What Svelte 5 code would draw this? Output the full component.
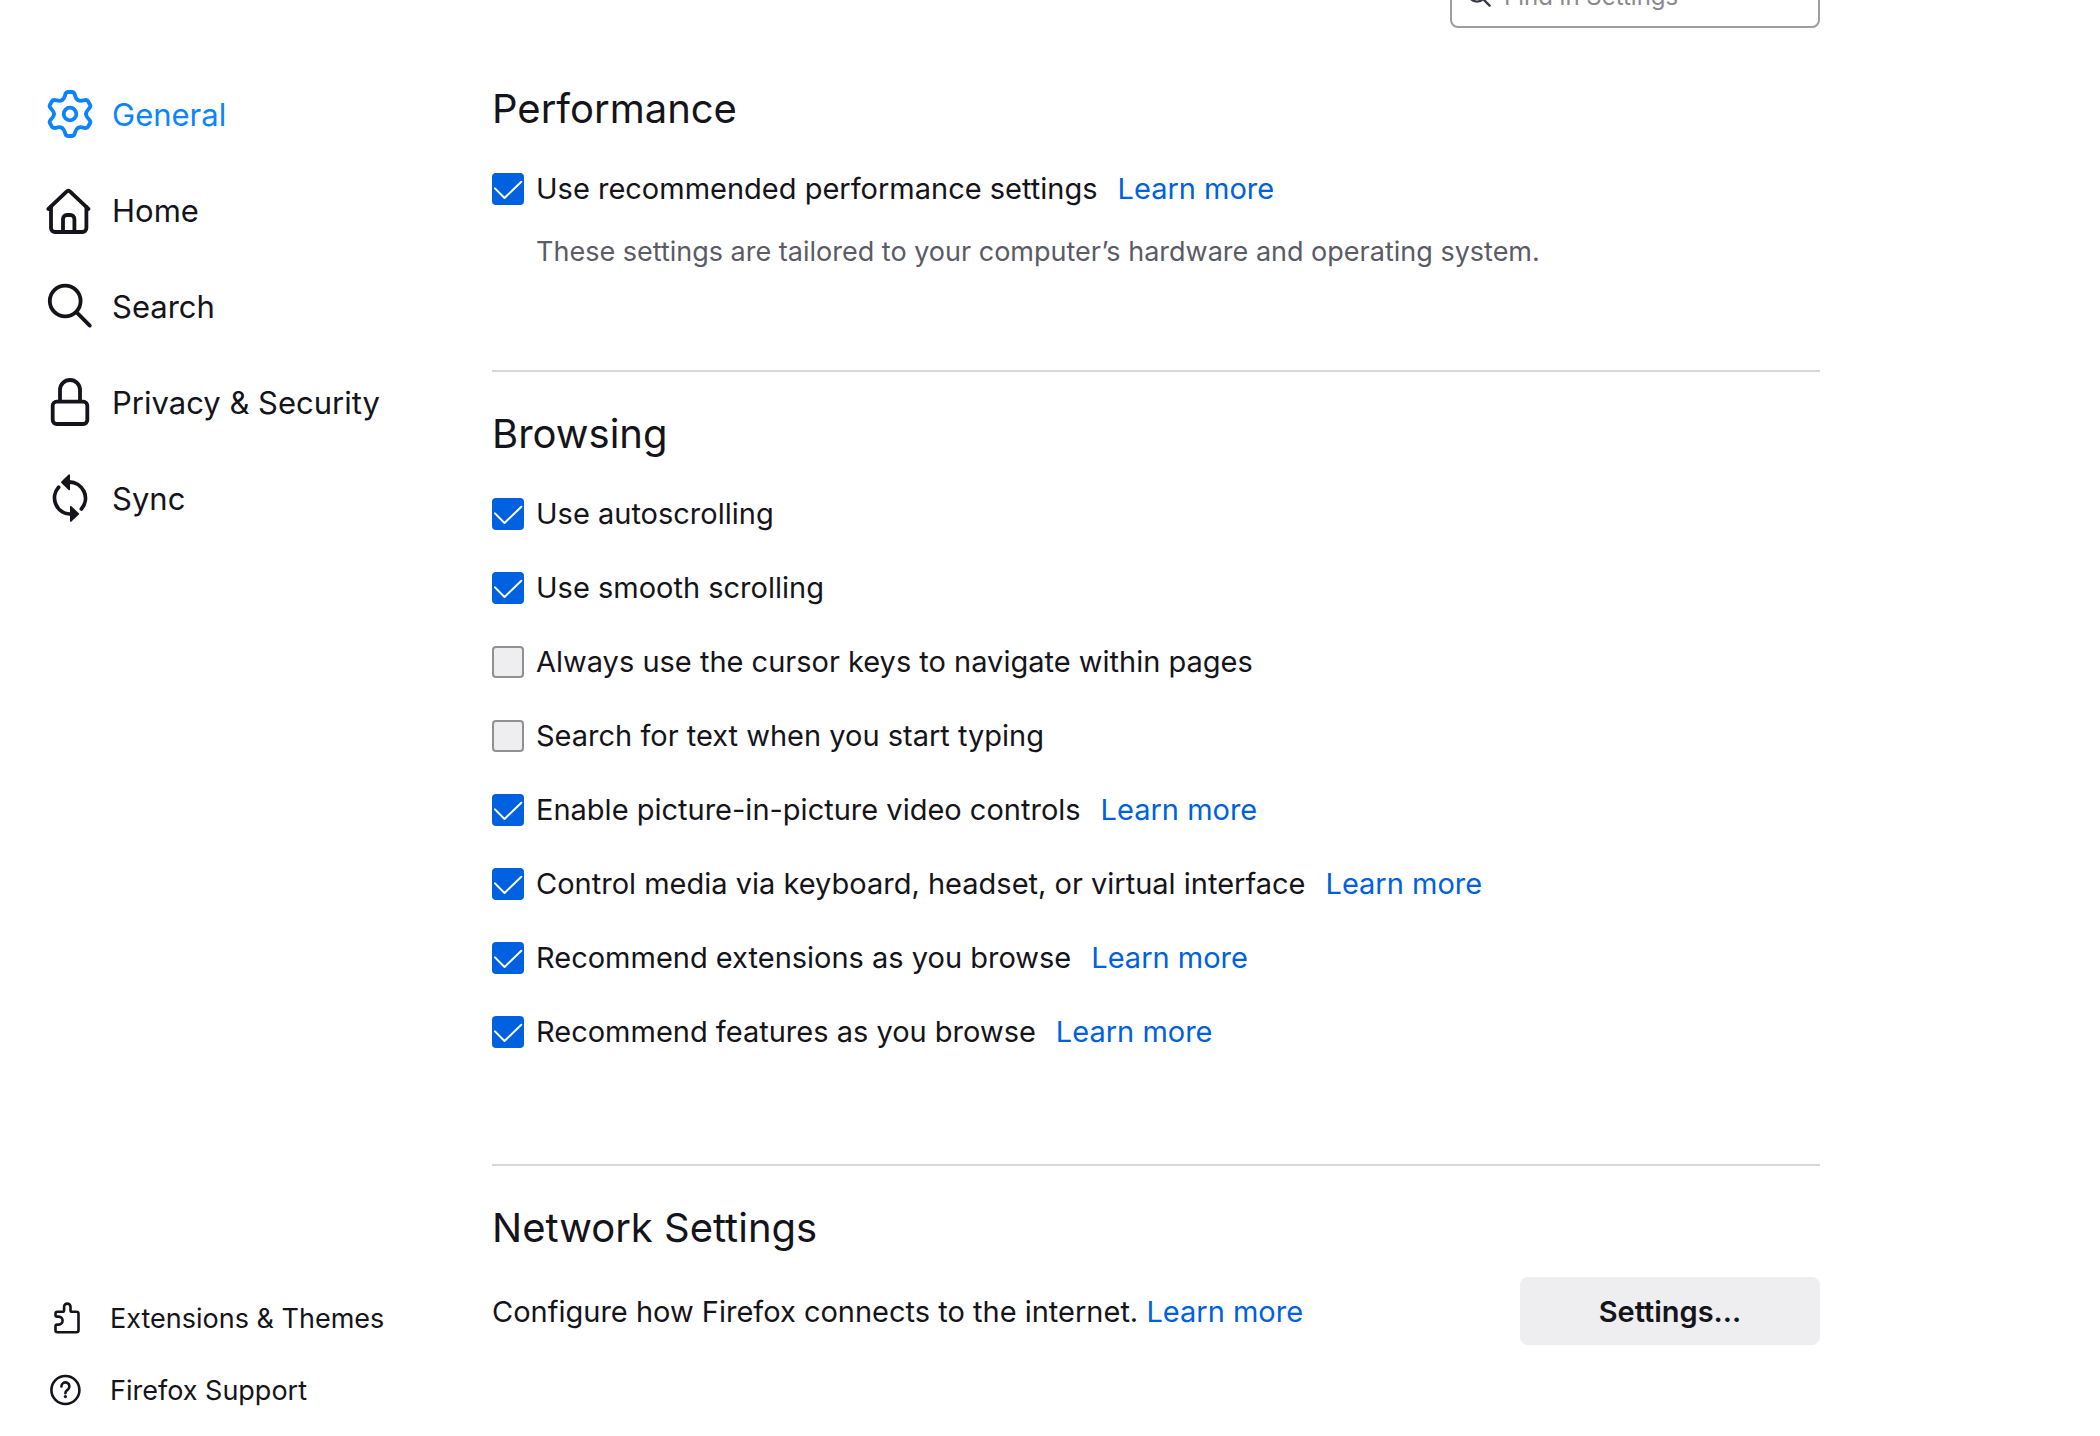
<script lang="ts">
	interface Option {
		id: string;
		label: string;
		checked: boolean;
		link?: boolean;
	}

	const categories = [
		{ id: 'general', label: 'General' },
		{ id: 'home', label: 'Home' },
		{ id: 'search', label: 'Search' },
		{ id: 'privacy', label: 'Privacy & Security' },
		{ id: 'sync', label: 'Sync' }
	];

	let selected = $state('general');

	let performance = $state<Option[]>([
		{ id: 'recommended-performance', label: 'Use recommended performance settings', checked: true, link: true }
	]);

	let browsing = $state<Option[]>([
		{ id: 'autoscroll', label: 'Use autoscrolling', checked: true },
		{ id: 'smooth-scroll', label: 'Use smooth scrolling', checked: true },
		{ id: 'cursor-keys', label: 'Always use the cursor keys to navigate within pages', checked: false },
		{ id: 'type-search', label: 'Search for text when you start typing', checked: false },
		{ id: 'pip', label: 'Enable picture-in-picture video controls', checked: true, link: true },
		{ id: 'media-control', label: 'Control media via keyboard, headset, or virtual interface', checked: true, link: true },
		{ id: 'cfr-extensions', label: 'Recommend extensions as you browse', checked: true, link: true },
		{ id: 'cfr-features', label: 'Recommend features as you browse', checked: true, link: true }
	]);
</script>

{#snippet icon(id: string)}
	<svg class="icon" viewBox="0 0 48 48" aria-hidden="true">
		{#if id === 'general'}
			<!-- one tooth, repeated around the hub -->
			{#each [0, 60, 120, 180, 240, 300] as angle}
				<path
					transform="rotate({angle} 24 24)"
					d="M16 10.1C18.6 8.6 18.6 6.5 19.3 4.4C19.8 2.8 20.8 2 22.3 2H25.7C27.2 2 28.2 2.8 28.7 4.4C29.4 6.5 29.4 8.6 32 10.1"
				/>
			{/each}
			<circle cx="24" cy="24" r="6.3" />
		{:else if id === 'home'}
			<path d="M2.4 22.9 20.3 5.8a3 3 0 0 1 4.1 0L42.4 22.9" />
			<path d="M5 21V42a4 4 0 0 0 4 4H36.4a4 4 0 0 0 4-4V21" />
			<path d="M17 46V33a4 4 0 0 1 4-4h3.4a4 4 0 0 1 4 4V46" />
		{:else if id === 'search'}
			<circle cx="19.2" cy="19" r="15.4" />
			<path d="M30.4 30.2 43.8 43.6" />
		{:else if id === 'privacy'}
			<path d="M14 23V12a10 10 0 0 1 20 0V23" />
			<rect x="6.7" y="23.6" width="34.6" height="22.4" rx="4" />
		{:else if id === 'sync'}
			<path d="M23 8A16.2 16.2 0 0 1 35.4 34.9" />
			<path d="M25 40.1A16.2 16.2 0 0 1 12.6 13.2" />
			<path class="solid" d="M24 1.4V15.4a.8.8 0 0 1-1.4.6L15.4 9a1 1 0 0 1 0-1.4L22.6.6A.8.8 0 0 1 24 1.2z" />
			<path class="solid" d="M24 46.8V32.8a.8.8 0 0 1 1.4-.6L32.8 39.2a1 1 0 0 1 0 1.4L25.4 47.6a.8.8 0 0 1-1.4-.6z" />
		{/if}
	</svg>
{/snippet}

{#snippet option(item: Option)}
	<div class="option">
		<span class="box">
			<input type="checkbox" id={item.id} bind:checked={item.checked} />
			<svg viewBox="0 0 32 32" aria-hidden="true"><path d="M3 15.4 12.5 25 29.3 8.8" /></svg>
		</span>
		<label for={item.id}>{item.label}</label>
		{#if item.link}
			<a class="learn" href="#{item.id}">Learn more</a>
		{/if}
	</div>
{/snippet}

<div class="page">
	<aside>
		<nav class="categories">
			{#each categories as category}
				<a
					href="#{category.id}"
					class:selected={selected === category.id}
					onclick={() => (selected = category.id)}
				>
					{@render icon(category.id)}
					<span>{category.label}</span>
				</a>
			{/each}
		</nav>

		<nav class="footer">
			<a href="#addons">
				<svg viewBox="0 0 32 32" aria-hidden="true">
					<path
						d="M5.5 13.5V11.8a2 2 0 0 1 2-2H12.5a1.6 1.6 0 0 0 1.6-1.6V4.8a3.2 3.2 0 0 1 6.4 0V8.2a1.6 1.6 0 0 0 1.6 1.6H26.5a2 2 0 0 1 2 2V28.2a2 2 0 0 1-2 2H7.5a2 2 0 0 1-2-2V24.2a1.6 1.6 0 0 1 1.6-1.6H8.6a4 4 0 0 0 0-8H6.6a1.1 1.1 0 0 1-1.1-1.1z"
					/>
				</svg>
				<span>Extensions &amp; Themes</span>
			</a>
			<a href="#support">
				<svg viewBox="0 0 32 32" aria-hidden="true">
					<circle cx="15.4" cy="16" r="14" />
					<path d="M11.4 12.4a4 4 0 1 1 6.6 3c-1.5 1.2-2.6 1.8-2.6 3.8" />
					<circle class="solid" cx="15.4" cy="22.6" r="1.6" />
				</svg>
				<span>Firefox Support</span>
			</a>
		</nav>
	</aside>

	<main>
		<div class="search">
			<svg viewBox="0 0 32 32" aria-hidden="true">
				<circle cx="13" cy="13" r="8.6" />
				<path d="M19.2 19.2 25.6 25.6" />
			</svg>
			<input type="search" placeholder="Find in Settings" aria-label="Find in Settings" />
		</div>

		<section>
			<h2>Performance</h2>
			{#each performance as item}
				{@render option(item)}
			{/each}
			<p class="description">These settings are tailored to your computer’s hardware and operating system.</p>
		</section>

		<section>
			<h2>Browsing</h2>
			<div class="options">
				{#each browsing as item}
					{@render option(item)}
				{/each}
			</div>
		</section>

		<section>
			<h2>Network Settings</h2>
			<div class="network">
				<p>Configure how Firefox connects to the internet. <a href="#network">Learn more</a></p>
				<button type="button">Settings…</button>
			</div>
		</section>
	</main>
</div>

<style>
	:global(body) {
		background: #fff;
		color: #15141a;
		font-family: Inter, 'Liberation Sans', sans-serif;
		font-size: 29px;
	}

	.page {
		display: flex;
		height: 100vh;
		overflow: hidden;
	}

	a {
		color: #0061e0;
		text-decoration: none;
	}

	svg {
		flex: none;
		fill: none;
		stroke: currentColor;
		stroke-width: 3;
		stroke-linecap: round;
		stroke-linejoin: round;
	}

	.solid {
		fill: currentColor;
		stroke: none;
	}

	aside {
		flex: none;
		display: flex;
		flex-direction: column;
		justify-content: space-between;
		box-sizing: border-box;
		width: 492px;
		padding: 90px 46px 30px;
	}

	aside span {
		padding-top: 2px;
	}

	.categories {
		display: flex;
		flex-direction: column;
		gap: 48px;
		font-size: 31px;
		line-height: 46px;
	}

	.categories a {
		display: flex;
		align-items: center;
		gap: 18px;
		color: inherit;
	}

	.categories a.selected {
		color: #0a84ff;
	}

	.icon {
		width: 48px;
		height: 48px;
		stroke-width: 3.8;
	}

	.footer {
		display: flex;
		flex-direction: column;
		gap: 40px;
		padding-left: 4px;
		font-size: 27px;
		line-height: 30px;
	}

	.footer a {
		display: flex;
		align-items: center;
		gap: 28px;
		color: inherit;
	}

	.footer svg {
		width: 32px;
		height: 32px;
		stroke-width: 2.6;
	}

	main {
		flex: 1;
		max-width: 1328px;
	}

	/* the pane is scrolled, so the field is partly above the window */
	.search {
		display: flex;
		align-items: center;
		gap: 8px;
		box-sizing: border-box;
		width: 370px;
		height: 64px;
		margin: -36px 0 0 auto;
		padding: 0 12px;
		border: 2px solid #9e9ea0;
		border-radius: 8px;
	}

	.search svg {
		width: 32px;
		height: 32px;
		color: #3a3944;
		stroke-width: 2.4;
	}

	.search input {
		flex: 1;
		min-width: 0;
		padding: 0;
		border: 0;
		outline: 0;
		background: none;
		font: inherit;
		font-size: 24px;
	}

	.search input::placeholder {
		color: #8a8a8e;
	}

	section {
		padding: 36px 0 113px;
	}

	section + section {
		border-top: 2px solid #d7d7db;
	}

	.search + section {
		padding: 55px 0 102px;
	}

	h2 {
		margin: 0 0 35px;
		font-size: 40px;
		font-weight: 400;
		line-height: 52px;
	}

	.options {
		display: flex;
		flex-direction: column;
		gap: 36px;
	}

	.option {
		display: flex;
		align-items: center;
		line-height: 38px;
	}

	.box {
		display: grid;
		width: 32px;
		height: 32px;
		margin-right: 12px;
	}

	.box input,
	.box svg {
		grid-area: 1 / 1;
		width: 32px;
		height: 32px;
		margin: 0;
	}

	.box input {
		appearance: none;
		box-sizing: border-box;
		border: 2px solid #919194;
		border-radius: 4px;
		background: #eeeef0;
	}

	.box input:checked {
		border-color: #0061e0;
		background: #0061e0;
	}

	.box svg {
		visibility: hidden;
		color: #fff;
		stroke-width: 2;
		pointer-events: none;
	}

	.box input:checked + svg {
		visibility: visible;
	}

	.learn {
		margin-left: 20px;
	}

	.description {
		margin: 28px 0 0 44px;
		color: #5b5b66;
		font-size: 27px;
		line-height: 32px;
	}

	.network {
		display: flex;
		align-items: center;
		justify-content: space-between;
		margin-top: -12px;
	}

	.network p {
		margin: 0;
	}

	button {
		width: 300px;
		height: 68px;
		border: 0;
		border-radius: 8px;
		background: #eeeef0;
		color: inherit;
		font: inherit;
		font-weight: 600;
	}
</style>
